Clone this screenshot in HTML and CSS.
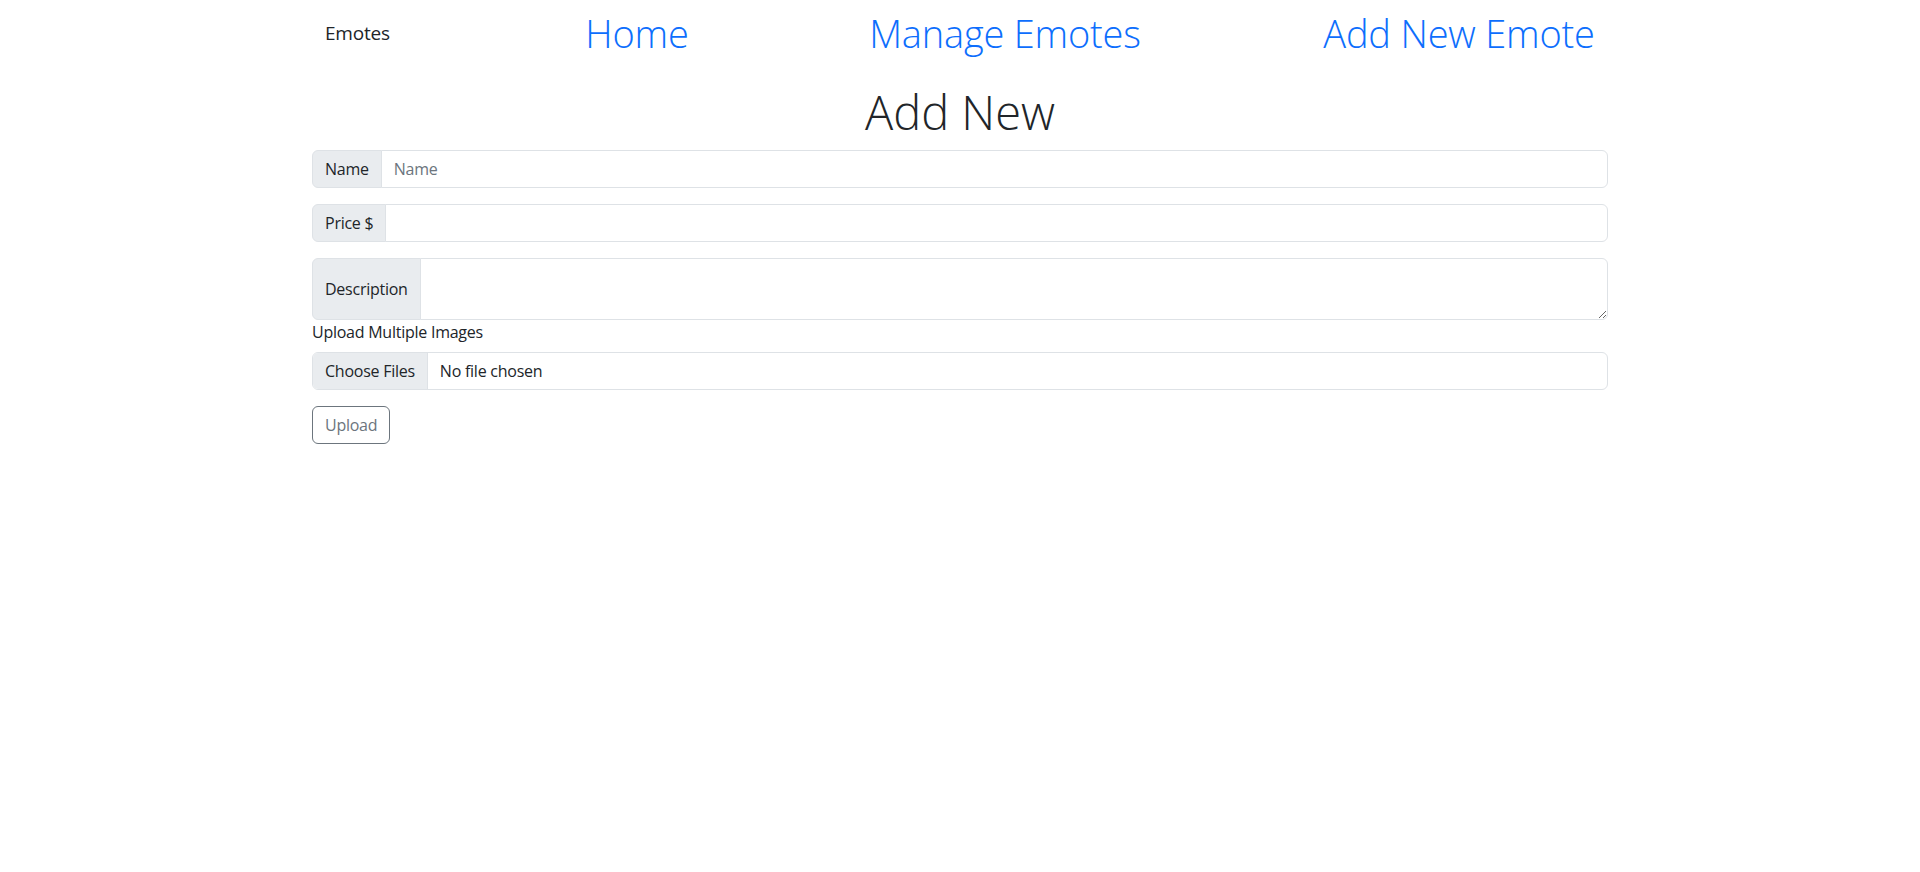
FILE: index.html
```html
<!DOCTYPE html>
<html lang="en">
<head>
<meta charset="utf-8">
<title>Add New Emote</title>
<link rel="stylesheet" href="styles.css">
</head>
<body>
<div class="container">
  <nav class="topnav">
    <a class="brand" href="#">Emotes</a>
    <a class="nav-link link-home" href="#">Home</a>
    <a class="nav-link link-manage" href="#">Manage Emotes</a>
    <a class="nav-link link-add" href="#">Add New Emote</a>
  </nav>
  <h1 class="page-title">Add New</h1>
  <form class="form">
    <div class="input-group mb-3">
      <span class="input-group-text">Name</span>
      <input class="form-control" type="text" placeholder="Name">
    </div>
    <div class="input-group mb-3">
      <span class="input-group-text">Price $</span>
      <input class="form-control" type="text">
    </div>
    <div class="input-group">
      <span class="input-group-text">Description</span>
      <textarea class="form-control textarea" rows="2"></textarea>
    </div>
    <label class="form-label">Upload Multiple Images</label>
    <div class="file-input mb-3">
      <span class="file-button">Choose Files</span>
      <span class="file-name">No file chosen</span>
    </div>
    <button class="btn-outline" type="button">Upload</button>
  </form>
</div>
</body>
</html>
```

FILE: styles.css
```css
* {
  box-sizing: border-box;
}

body {
  margin: 0;
  font-family: "Open Sans", "Noto Sans", sans-serif;
  font-size: 16px;
  line-height: 1.5;
  color: #212529;
  background: #fff;
}

.container {
  max-width: 1320px;
  margin: 0 auto;
  padding: 0 12px;
}

.topnav {
  display: flex;
  align-items: center;
  padding: 9px 0 27px 13px;
}

.brand {
  flex: none;
  color: #212529;
  text-decoration: none;
  font-size: 19px;
  letter-spacing: -0.2px;
  line-height: 30px;
  width: 164px;
}

.nav-link {
  flex: none;
  color: #0d6efd;
  text-decoration: none;
  font-size: 38px;
  font-weight: 300;
  letter-spacing: -0.2px;
  line-height: 48px;
  text-align: center;
  white-space: nowrap;
}

.link-home {
  width: 200px;
  margin-left: 48px;
}

.link-manage {
  width: 340px;
  margin-left: 98px;
}

.link-add {
  width: 296px;
  margin-left: 136px;
}

.page-title {
  margin: 0 0 8px;
  font-size: 47px;
  font-weight: 300;
  line-height: 57.6px;
  text-align: center;
}

.form {
  display: flex;
  flex-direction: column;
  align-items: flex-start;
  letter-spacing: -0.25px;
}

.input-group {
  display: flex;
  align-items: stretch;
  width: 100%;
}

.mb-3 {
  margin-bottom: 16px;
}

.input-group-text {
  display: flex;
  align-items: center;
  padding: 6px 12px;
  font-size: 16px;
  line-height: 24px;
  color: #212529;
  background: #e9ecef;
  border: 1px solid #dee2e6;
  border-radius: 6px 0 0 6px;
  white-space: nowrap;
}

.form-control {
  flex: 1 1 auto;
  min-width: 0;
  margin-left: -1px;
  padding: 6px 12px;
  font-family: inherit;
  font-size: 16px;
  line-height: 24px;
  letter-spacing: -0.25px;
  color: #212529;
  background: #fff;
  border: 1px solid #dee2e6;
  border-radius: 0 6px 6px 0;
  outline: none;
}

.form-control::placeholder {
  color: #6c757d;
}

.textarea {
  height: 62px;
  resize: vertical;
}

.form-label {
  display: block;
  margin-bottom: 8px;
  line-height: 24px;
}

.file-input {
  display: flex;
  width: 100%;
  border: 1px solid #dee2e6;
  border-radius: 6px;
  overflow: hidden;
  line-height: 24px;
}

.file-button {
  padding: 6px 12px;
  background: #e9ecef;
  border-right: 1px solid #dee2e6;
  color: #212529;
}

.file-name {
  padding: 6px 12px;
  color: #212529;
}

.btn-outline {
  padding: 6px 12px;
  font-family: inherit;
  font-size: 16px;
  line-height: 24px;
  letter-spacing: -0.25px;
  color: #6c757d;
  background: transparent;
  border: 1px solid #6c757d;
  border-radius: 6px;
}
```
